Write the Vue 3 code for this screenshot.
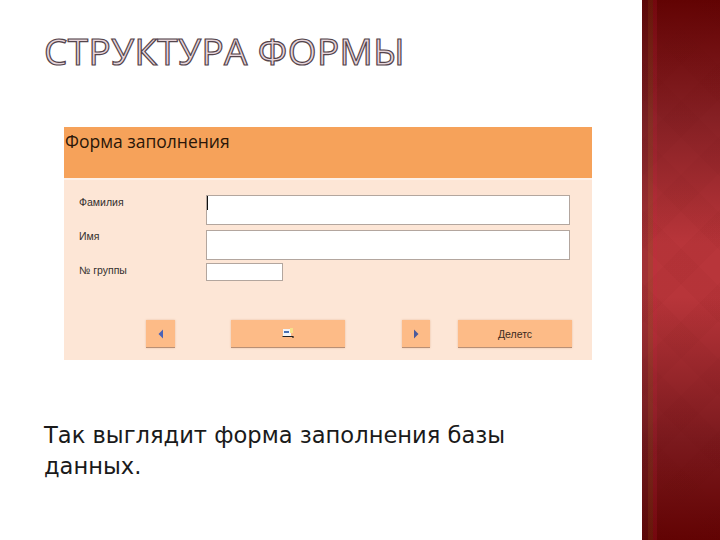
<template>
  <div class="slide">
    <main class="content">
      <h1 class="title">СТРУКТУРА ФОРМЫ</h1>

      <section class="form">
        <header class="form-head">Форма заполнения</header>
        <div class="form-body">
          <div class="row row-tall">
            <label class="label">Фамилия</label>
            <div class="input input-wide"><span class="caret"></span></div>
          </div>
          <div class="row row-tall row-tight">
            <label class="label">Имя</label>
            <div class="input input-wide"></div>
          </div>
          <div class="row">
            <label class="label">№ группы</label>
            <div class="input input-short"></div>
          </div>

          <div class="buttons">
            <button class="btn btn-small">
              <svg width="8" height="12" viewBox="0 0 8 12"><path d="M6 1.5V10.5L1.5 6Z" fill="#4a62b8" /></svg>
            </button>
            <button class="btn btn-large btn-save">
              <svg width="12" height="11" viewBox="0 0 12 11">
                <rect x="1" y="1" width="8" height="7" fill="#f2f4f8" />
                <rect x="2" y="3" width="5" height="2" fill="#4a70b0" />
                <rect x="8" y="0" width="3" height="5" fill="#f7e08a" />
                <path d="M0.5 8.5H11V10" fill="none" stroke="#222" stroke-width="1.2" />
              </svg>
            </button>
            <button class="btn btn-small btn-next">
              <svg width="8" height="12" viewBox="0 0 8 12"><path d="M2 1.5V10.5L6.5 6Z" fill="#4a5a9c" /></svg>
            </button>
            <button class="btn btn-large btn-delete">Делетс</button>
          </div>
        </div>
      </section>

      <p class="caption">Так выглядит форма заполнения базы данных.</p>
    </main>
    <aside class="side"></aside>
  </div>
</template>

<script setup>
</script>

<style>
html, body {
  margin: 0;
  background: #fff;
}
</style>

<style scoped>
.slide {
  display: flex;
  width: 720px;
  height: 540px;
  overflow: hidden;
  font-family: "DejaVu Sans", Verdana, sans-serif;
}

.content {
  width: 642px;
  flex: none;
  box-sizing: border-box;
  padding: 28px 0 0 44px;
}

.title {
  margin: 0;
  font-family: "Open Sans", "Noto Sans", sans-serif;
  font-size: 37px;
  line-height: 46px;
  font-weight: 400;
  letter-spacing: 0.4px;
  white-space: nowrap;
  color: #e6d5da;
  -webkit-text-stroke: 1.2px #54444b;
}

.form {
  width: 528px;
  height: 233px;
  margin: 53px 0 0 20px;
  background: #fdf1e9;
  display: flex;
  flex-direction: column;
}

.form-head {
  height: 51px;
  flex: none;
  box-sizing: border-box;
  padding: 3px 0 0 1px;
  background: #f6a25a;
  color: #2a1608;
  font-family: "Open Sans", "Noto Sans", sans-serif;
  font-size: 17.5px;
  line-height: 22px;
}

.form-body {
  flex: 1;
  box-sizing: border-box;
  margin-top: 2px;
  padding-top: 15px;
  background: #fde6d6;
  display: flex;
  flex-direction: column;
}

.row {
  display: flex;
  align-items: flex-start;
  height: 18px;
  margin-bottom: 5px;
}

.row-tall {
  height: 30px;
}

.row-tight {
  margin-bottom: 3px;
}

.row-tight .label {
  padding-top: 0;
}

.label {
  width: 142px;
  flex: none;
  box-sizing: border-box;
  padding: 1px 0 0 15px;
  font-size: 10.5px;
  line-height: 12px;
  color: #33302e;
  font-family: "Liberation Sans", Arial, sans-serif;
}

.input {
  box-sizing: border-box;
  background: #fff;
  border: 1px solid #b3a69e;
  height: 100%;
}

.input-wide {
  width: 364px;
}

.input-short {
  width: 77px;
}

.caret {
  display: block;
  width: 1px;
  height: 14px;
  background: #111;
}

.buttons {
  display: flex;
  margin-top: 34px;
  padding-left: 82px;
}

.btn {
  height: 28px;
  box-sizing: border-box;
  padding: 0;
  border: 0;
  border-bottom: 1px solid #b98f74;
  background: #fdbb87;
  box-shadow: 0 0 2px #e8bfa2;
  display: flex;
  align-items: center;
  justify-content: center;
  color: #3a2a20;
  font-family: "Liberation Sans", Arial, sans-serif;
  font-size: 10.5px;
}

.btn-small {
  width: 29px;
}

.btn-large {
  width: 114px;
}

.btn-save {
  margin-left: 56px;
}

.btn-next {
  margin-left: 57px;
  width: 28px;
}

.btn-delete {
  margin-left: 28px;
}

.caption {
  margin: 60px 0 0;
  width: 500px;
  font-size: 22.6px;
  line-height: 31px;
  color: #1a1a1a;
}

.side {
  flex: 1;
  background:
    linear-gradient(to right,
      rgba(60, 30, 30, 0.18) 0 6px,
      rgba(120, 90, 30, 0.22) 6px 11px,
      rgba(210, 30, 70, 0.16) 11px 15px,
      transparent 15px),
    repeating-linear-gradient(45deg, rgba(90, 0, 0, 0.03) 0 26px, transparent 26px 52px),
    repeating-linear-gradient(-45deg, rgba(90, 0, 0, 0.03) 0 26px, transparent 26px 52px),
    linear-gradient(to bottom, #620303 0%, #862024 22%, #b8353a 45%, #b8353a 55%, #7c1a1e 81%, #620303 100%);
}
</style>
